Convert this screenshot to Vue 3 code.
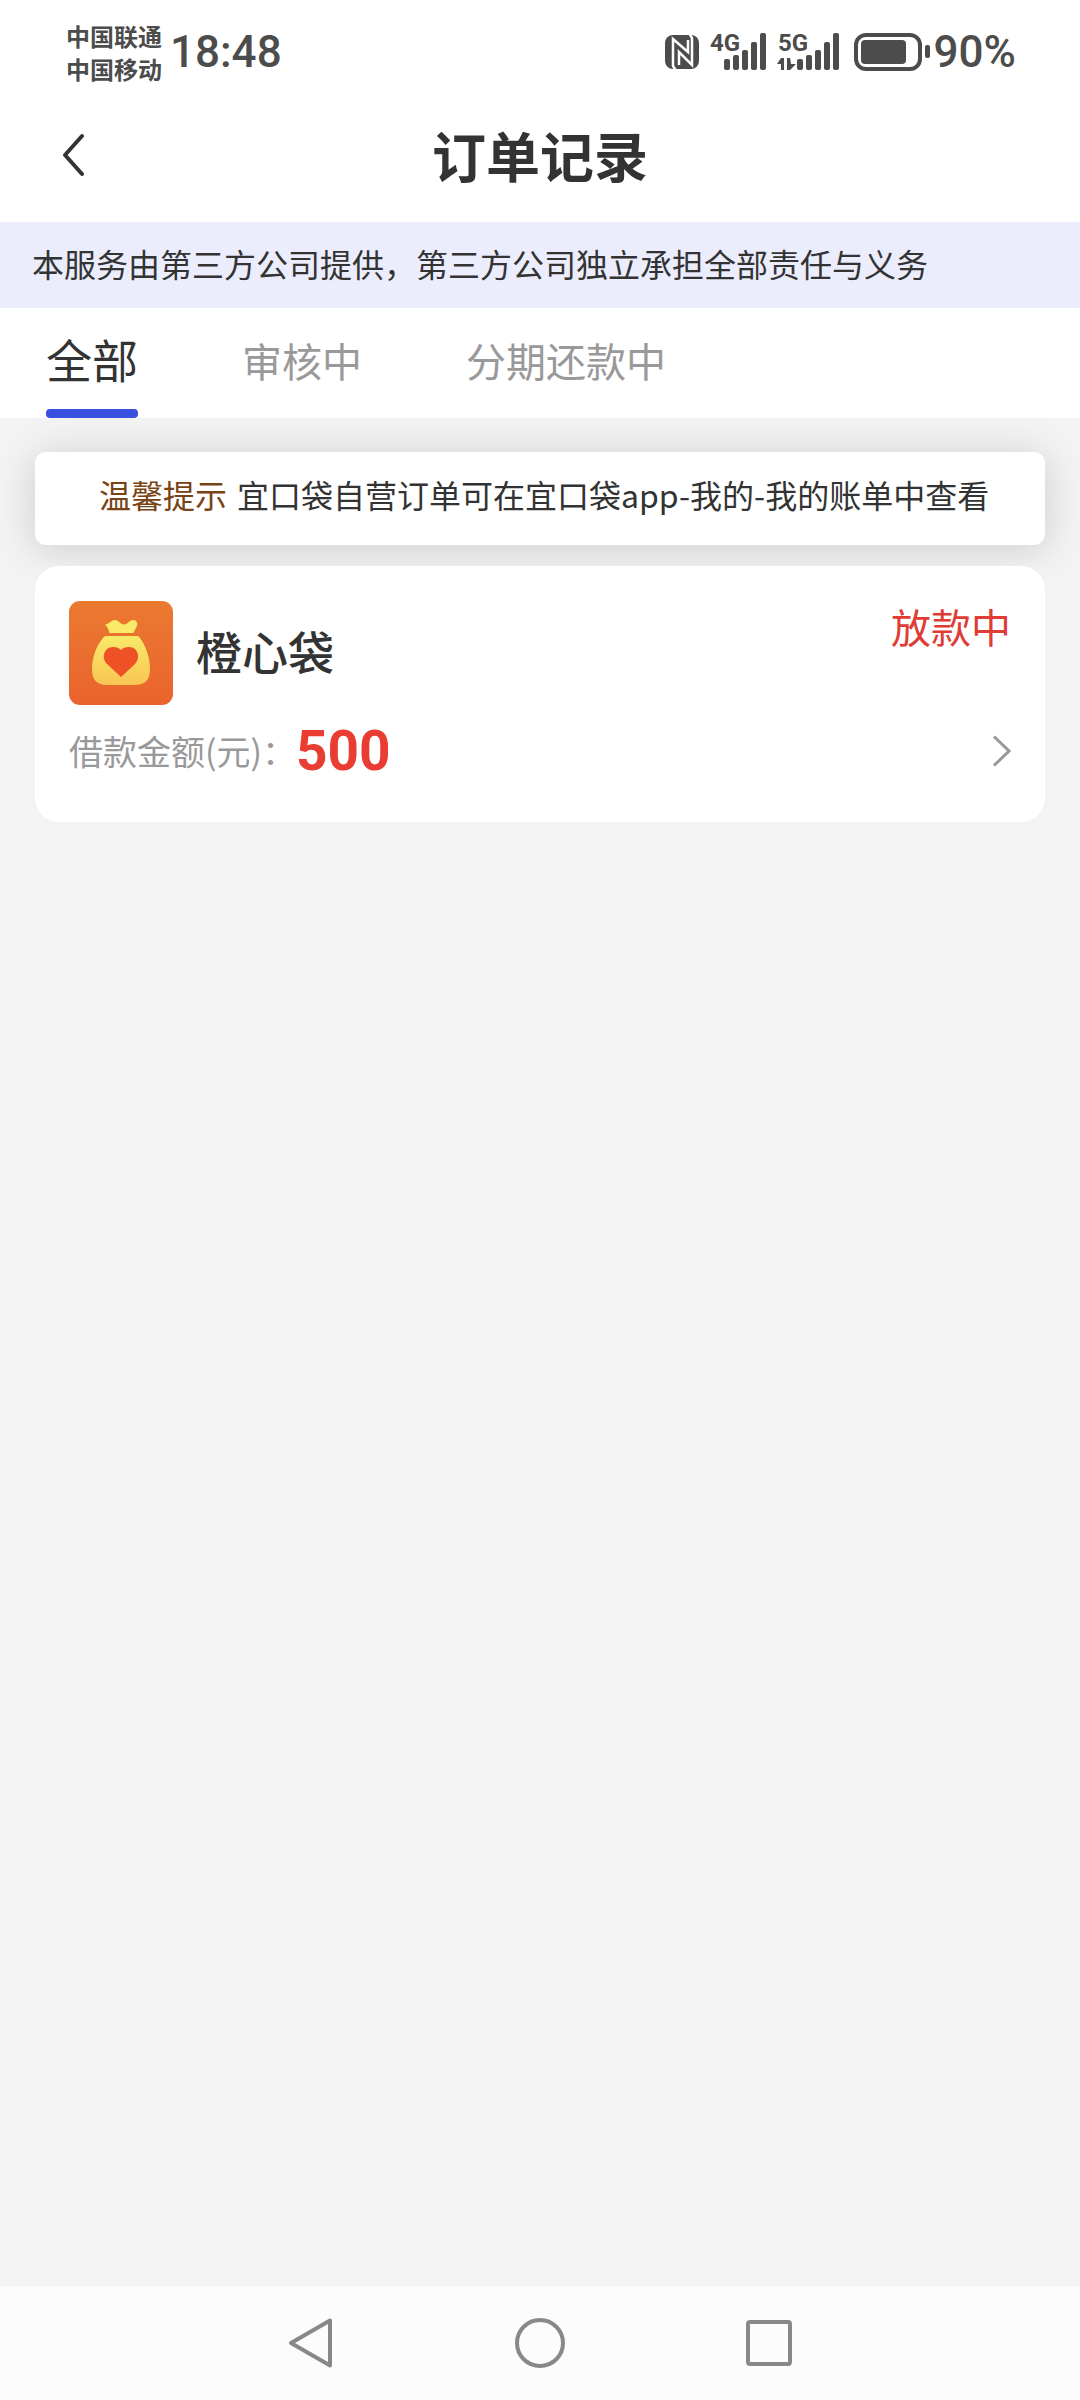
<script setup>
import { ref } from 'vue'

const tabs = ['全部', '审核中', '分期还款中']
const active = ref('全部')

const orders = [{ id: 1, name: '橙心袋', status: '放款中', amount: 500 }]
</script>

<template>
  <div class="page">
    <div class="status-bar">
      <div class="carriers">
        <span>中国联通</span>
        <span>中国移动</span>
      </div>
      <span class="clock">18:48</span>
      <svg class="indicators" width="268" height="56" viewBox="0 -8 268 56" aria-hidden="true">
        <g fill="#4c4c4c">
          <rect x="1" y="3" width="34" height="34" rx="8" />
          <path
            d="M12 39 9 34V7l15 13V8M25 1l3 5v27L15 20v13"
            fill="none"
            stroke="#fff"
            stroke-width="2.500"
          />
          <text x="46" y="19">4G</text>
          <rect x="60" y="27" width="6" height="11" rx="2" />
          <rect x="69" y="23" width="6" height="15" rx="2" />
          <rect x="78" y="18" width="6" height="20" rx="2" />
          <rect x="87" y="10" width="6" height="28" rx="2" />
          <rect x="96" y="1" width="6" height="37" rx="2" />
          <text x="114" y="19">5G</text>
          <path d="M117 26h3v12h-3v-6h-4ZM123 26h3l1 6h5l-6 6h-3Z" />
          <rect x="133" y="27" width="6" height="11" rx="2" />
          <rect x="142" y="23" width="6" height="15" rx="2" />
          <rect x="151" y="18" width="6" height="20" rx="2" />
          <rect x="160" y="10" width="6" height="28" rx="2" />
          <rect x="169" y="1" width="6" height="37" rx="2" />
          <rect x="197" y="8" width="45" height="24" rx="4" />
          <rect x="261" y="13" width="5" height="13" rx="2" />
        </g>
        <rect x="192" y="3" width="64" height="34" rx="10" fill="none" stroke="#4c4c4c" stroke-width="4" />
      </svg>
      <span class="battery">90%</span>
    </div>

    <header class="title-bar">
      <button class="back" type="button" aria-label="返回">
        <svg width="26" height="44" viewBox="0 0 26 44">
          <path d="M24 3 7 22l17 19" fill="none" stroke="#333" stroke-width="4" stroke-linecap="round" stroke-linejoin="round" />
        </svg>
      </button>
      <h1>订单记录</h1>
    </header>

    <p class="disclaimer">本服务由第三方公司提供，第三方公司独立承担全部责任与义务</p>

    <nav class="tabs">
      <button
        v-for="tab in tabs"
        :key="tab"
        type="button"
        class="tab"
        :class="{ active: tab === active }"
        @click="active = tab"
      >{{ tab }}</button>
    </nav>

    <main class="content">
      <p class="notice">
        <span class="notice-tag">温馨提示</span>
        <span>宜口袋自营订单可在宜口袋app-我的-我的账单中查看</span>
      </p>

      <article v-for="order in orders" :key="order.id" class="order">
        <div class="order-head">
          <svg class="logo" width="104" height="104" viewBox="0 0 104 104" aria-hidden="true">
            <defs>
              <linearGradient id="tile" x1="0" y1="0" x2="0" y2="1">
                <stop offset="0" stop-color="#ea7a30" />
                <stop offset="1" stop-color="#ea632e" />
              </linearGradient>
              <linearGradient id="bag" x1="0" y1="0" x2="0" y2="1">
                <stop offset="0" stop-color="#f9ea68" />
                <stop offset="1" stop-color="#f8c552" />
              </linearGradient>
            </defs>
            <rect width="104" height="104" rx="11" fill="url(#tile)" />
            <path d="M36 23.500c4 0 6-4.500 10-4.500s5 4.500 9 4.500S60 19 64 19c4.500 0 5 4 3.500 7-1 2-2 3.500-3 6H40.500c-1-4-2-6-4.500-8.500Z" fill="#f9ea68" />
            <path d="M38 35h29c2 0 3 .500 4 2 6 8 10 20 10 31 0 11-5 16-15 16H38c-10 0-15-5-15-16 0-11 4-23 11-31 1-1.500 2-2 4-2Z" fill="url(#bag)" />
            <path d="M52 76 38 63c-6-6-3-17 6-17 4 0 6 1 8 3 2-2 4-3 8-3 9 0 12 11 6 17Z" fill="#ee5126" />
          </svg>
          <h2>{{ order.name }}</h2>
          <span class="state">{{ order.status }}</span>
        </div>
        <div class="order-row">
          <span class="label">借款金额(元)：</span>
          <strong class="amount">{{ order.amount }}</strong>
          <svg class="more" width="20" height="34" viewBox="0 0 20 34" aria-hidden="true">
            <path d="M3 2.500 18 17 3 31.500" fill="none" stroke="#999" stroke-width="3" />
          </svg>
        </div>
      </article>
    </main>

    <div class="system-nav">
      <button type="button" aria-label="后退">
        <svg width="54" height="54" viewBox="0 0 54 54">
          <path d="M46 4.500v45L7 27Z" fill="none" stroke="#888" stroke-width="4" stroke-linejoin="round" />
        </svg>
      </button>
      <button type="button" aria-label="主页">
        <svg width="54" height="54" viewBox="0 0 54 54">
          <circle cx="27" cy="27" r="23" fill="none" stroke="#888" stroke-width="4" />
        </svg>
      </button>
      <button type="button" aria-label="最近任务">
        <svg width="54" height="54" viewBox="0 0 54 54">
          <rect x="6" y="6" width="42" height="42" rx="2" fill="none" stroke="#888" stroke-width="4" />
        </svg>
      </button>
    </div>
  </div>
</template>

<style>
body {
  margin: 0;
}
</style>

<style scoped>
.page {
  display: flex;
  flex-direction: column;
  min-height: 100vh;
  background: #fff;
  color: #333;
  font-family: "Noto Sans CJK SC", sans-serif;
}

h1,
h2,
p {
  margin: 0;
}

button {
  padding: 0;
  border: 0;
  background: none;
  color: inherit;
  font: inherit;
  cursor: pointer;
}

svg {
  display: block;
}

.status-bar {
  display: flex;
  align-items: center;
  height: 104px;
  padding: 0 64px 0 66px;
  color: #4c4c4c;
}

.carriers {
  display: flex;
  flex-direction: column;
  font-size: 24px;
  font-weight: 700;
  line-height: 33px;
}

.clock,
.battery {
  font-family: Roboto, sans-serif;
  font-size: 44px;
  font-weight: 500;
  line-height: 52px;
}

.clock {
  margin-left: 8px;
}

.indicators {
  margin-left: auto;
}

.indicators text {
  font-family: Roboto, sans-serif;
  font-size: 24px;
  font-weight: 700;
}

.battery {
  margin-left: 2px;
}

.title-bar {
  display: grid;
  grid-template-columns: 1fr auto 1fr;
  align-items: center;
  height: 102px;
  padding: 0 58px 16px;
}

.back {
  justify-self: start;
}

.title-bar h1 {
  font-size: 54px;
  font-weight: 700;
  line-height: 80px;
}

.disclaimer {
  padding: 17px 32px 21px;
  background: #ebedfc;
  font-size: 32px;
  line-height: 48px;
}

.tabs {
  display: flex;
  gap: 104px;
  height: 110px;
  padding: 0 46px;
}

.tab {
  display: flex;
  flex-direction: column;
  align-items: center;
  justify-content: flex-start;
  padding-top: 16px;
  color: #999;
  font-size: 40px;
  line-height: 72px;
}

.tab.active {
  justify-content: space-between;
  padding-top: 14px;
  color: #333;
  font-size: 46px;
}

.tab.active::after {
  width: 100%;
  height: 9px;
  border-radius: 4px;
  background: #3a50e0;
  content: "";
}

.content {
  display: flex;
  flex: 1;
  flex-direction: column;
  gap: 21px;
  padding: 34px 35px;
  overflow: hidden;
  background: #f3f3f3;
}

.notice {
  display: flex;
  gap: 10px;
  padding: 18px 24px 27px 64px;
  border-radius: 11px;
  background: #fff;
  box-shadow: 0 4px 40px rgba(0, 0, 0, 0.16);
  font-size: 32px;
  line-height: 48px;
}

.notice-tag {
  color: #784315;
}

.order {
  padding: 35px 34px 39px;
  border-radius: 24px;
  background: #fff;
}

.order-head {
  display: flex;
  align-items: center;
}

.order-head h2 {
  margin-left: 23px;
  padding-bottom: 6px;
  font-size: 46px;
  font-weight: 500;
  line-height: 64px;
}

.state {
  align-self: flex-start;
  margin-left: auto;
  color: #df3c36;
  font-size: 40px;
  line-height: 50px;
}

.order-row {
  display: flex;
  align-items: center;
  padding: 14px 0 0;
}

.label {
  color: #999;
  font-size: 34px;
  line-height: 48px;
}

.amount {
  color: #e93c32;
  font-family: Roboto, sans-serif;
  font-size: 55px;
  font-weight: 700;
  line-height: 64px;
}

.more {
  margin-left: auto;
}

.system-nav {
  display: flex;
  align-items: center;
  justify-content: center;
  gap: 175px;
  height: 114px;
  background: #fcfcfc;
}
</style>
